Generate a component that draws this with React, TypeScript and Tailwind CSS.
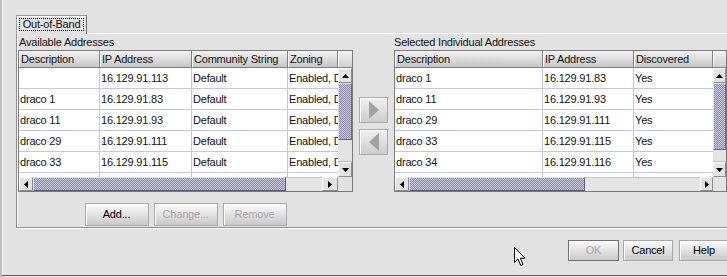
import React from 'react';

type Col = { label: string; w: number };

const thumbPattern =
  'bg-[repeating-conic-gradient(#8c8ca8_0%_25%,#c8c8da_0%_50%)] bg-size-[2px_2px]';

function Tri({ dir }: { dir: 'up' | 'down' | 'left' | 'right' }) {
  const pts = {
    up: '0,4 3.5,0 7,4',
    down: '0,0 3.5,4 7,0',
    left: '4,0 0,3.5 4,7',
    right: '0,0 4,3.5 0,7',
  }[dir];
  const vert = dir === 'up' || dir === 'down';
  return (
    <svg width={vert ? 7 : 4} height={vert ? 4 : 7} viewBox={vert ? '0 0 7 4' : '0 0 4 7'}>
      <polygon points={pts} fill="#000" />
    </svg>
  );
}

function ScrollBtn({ dir, className }: { dir: 'up' | 'down' | 'left' | 'right'; className: string }) {
  return (
    <div
      className={`flex items-center justify-center bg-[#e2e2e2] border border-t-white border-l-white border-r-[#8c8c8c] border-b-[#8c8c8c] ${className}`}
    >
      <Tri dir={dir} />
    </div>
  );
}

interface TableProps {
  cols: Col[];
  rows: string[][];
  scrollW: number;
  vThumb: number;
  hThumb: number;
  hTrack: number;
}

function Table({ cols, rows, scrollW, vThumb, hThumb, hTrack }: TableProps) {
  return (
    <div className="h-[142px] border border-[#7a7a7a] flex flex-col bg-[#e2e2e2]">
      {/* header */}
      <div className="h-[17px] flex shrink-0">
        {cols.map((c) => (
          <div
            key={c.label}
            style={{ width: c.w }}
            className="shrink-0 h-full border-r border-b border-r-[#808080] border-b-[#808080] bg-linear-to-b from-[#f2f2f2] to-[#c6c6c6] shadow-[inset_1px_0_0_#ffffff] pl-[2px] leading-[17px] whitespace-nowrap overflow-hidden"
          >
            {c.label}
          </div>
        ))}
        <div className="flex-1 h-full border-b border-b-[#808080] bg-linear-to-b from-[#f2f2f2] to-[#d0d0d0] shadow-[inset_1px_0_0_#ffffff]" />
      </div>

      {/* body */}
      <div className="h-[109px] flex shrink-0">
        <div className="flex-1 bg-white overflow-hidden">
          {rows.map((r, i) => (
            <div key={i} className="flex h-[21px] border-b border-b-[#c4c4f0]">
              {cols.map((c, j) => (
                <div
                  key={j}
                  style={{ width: c.w }}
                  className={`shrink-0 h-[20px] leading-[21px] pl-[1px] whitespace-nowrap overflow-hidden ${
                    j < cols.length - 1 ? 'border-r border-r-[#c4c4f0]' : ''
                  }`}
                >
                  {r[j]}
                </div>
              ))}
            </div>
          ))}
        </div>
        <div style={{ width: scrollW }} className="shrink-0 flex flex-col">
          <ScrollBtn dir="up" className="h-[15px] shrink-0" />
          <div
            style={{ height: vThumb }}
            className={`shrink-0 border border-t-[#dcdce8] border-l-[#dcdce8] border-r-[#6a6a86] border-b-[#6a6a86] ${thumbPattern}`}
          />
          <div className="flex-1 bg-[#e4e4e4] border-b border-b-[#bdbdbd]" />
          <ScrollBtn dir="down" className="h-[15px] shrink-0" />
        </div>
      </div>

      {/* horizontal scrollbar */}
      <div className="h-[14px] flex shrink-0">
        <ScrollBtn dir="left" className="w-[14px] shrink-0" />
        <div
          style={{ width: hThumb }}
          className={`shrink-0 border border-t-[#dcdce8] border-l-[#dcdce8] border-r-[#5e5e7a] border-b-[#5e5e7a] ${thumbPattern}`}
        />
        <div style={{ width: hTrack }} className="shrink-0 bg-[#e4e4e4] border-t border-t-[#c4c4c4]" />
        <ScrollBtn dir="right" className="flex-1" />
        <div style={{ width: scrollW }} className="shrink-0 bg-[#e2e2e2]" />
      </div>
    </div>
  );
}

function Button({ label, w, disabled, isDefault }: { label: string; w: string; disabled?: boolean; isDefault?: boolean }) {
  return (
    <div
      className={`${w} shrink-0 flex items-center justify-center border bg-linear-to-b from-[#fbfbfb] to-[#c9c9c9] shadow-[inset_1px_1px_0_#ffffff] ${
        isDefault ? 'border-[#6e6e6e]' : 'border-[#a8a8a8]'
      } ${disabled ? 'text-[#a6a6a6]' : 'text-black'}`}
    >
      {label}
    </div>
  );
}

function MoveBtn({ dir }: { dir: 'left' | 'right' }) {
  return (
    <div className="w-[29px] h-[26px] border border-[#a9a9a9] bg-linear-to-b from-[#f0f0f0] to-[#cdcdcd] shadow-[inset_1px_1px_0_#ffffff] flex items-center justify-center">
      <svg width="10" height="18" viewBox="0 0 10 18">
        <polygon points={dir === 'right' ? '0,0 10,9 0,18' : '10,0 0,9 10,18'} fill="#a2a2a2" />
      </svg>
    </div>
  );
}

const leftCols: Col[] = [
  { label: 'Description', w: 81 },
  { label: 'IP Address', w: 92 },
  { label: 'Community String', w: 96 },
  { label: 'Zoning', w: 50 },
];

const leftRows = [
  ['', '16.129.91.113', 'Default', 'Enabled, D'],
  ['draco 1', '16.129.91.83', 'Default', 'Enabled, D'],
  ['draco 11', '16.129.91.93', 'Default', 'Enabled, D'],
  ['draco 29', '16.129.91.111', 'Default', 'Enabled, D'],
  ['draco 33', '16.129.91.115', 'Default', 'Enabled, D'],
  ['', '', '', ''],
];

const rightCols: Col[] = [
  { label: 'Description', w: 148 },
  { label: 'IP Address', w: 91 },
  { label: 'Discovered', w: 79 },
];

const rightRows = [
  ['draco 1', '16.129.91.83', 'Yes'],
  ['draco 11', '16.129.91.93', 'Yes'],
  ['draco 29', '16.129.91.111', 'Yes'],
  ['draco 33', '16.129.91.115', 'Yes'],
  ['draco 34', '16.129.91.116', 'Yes'],
  ['', '', ''],
];

export default function App() {
  return (
    <div className="relative w-[727px] h-[277px] overflow-hidden flex flex-col bg-[#e2e2e2] border-l-2 border-l-[#bababa] shadow-[inset_1px_0_0_#f6f6f6] pt-[15px] font-['Liberation_Sans',Arial,sans-serif] text-[11px] tracking-[-0.2px] text-[#111]">
      {/* tab strip */}
      <div className="flex h-[19px] ml-[14px] shrink-0">
        <div className="w-[71px] border-t border-l border-r border-t-[#9a9a9a] border-l-[#9a9a9a] border-r-[#6a6a6a] shadow-[inset_1px_1px_0_#ffffff] flex items-start justify-center pt-[2px]">
          <span className="border border-dotted border-black px-[3px] leading-[11px] h-[13px]">Out-of-Band</span>
        </div>
        <div className="flex-1 border-b border-b-white" />
      </div>

      {/* tab panel */}
      <div className="ml-[14px] h-[194px] shrink-0 flex border-l border-b border-l-[#8e8e8e] border-b-[#8e8e8e] shadow-[inset_1px_0_0_#ffffff,0_1px_0_#ffffff] pl-[1px]">
        <div className="w-[335px] flex flex-col shrink-0">
          <div className="h-[16px] leading-[16px] pl-[1px]">Available Addresses</div>
          <Table cols={leftCols} rows={leftRows} scrollW={14} vThumb={57} hThumb={253} hTrack={36} />
          <div className="mt-[11px] flex justify-center gap-[5px] h-[23px]">
            <Button label="Add..." w="w-[64px]" />
            <Button label="Change..." w="w-[64px]" disabled />
            <Button label="Remove" w="w-[64px]" disabled />
          </div>
        </div>
        <div className="w-[41px] shrink-0 flex flex-col gap-[6px] pl-[6px] pt-[63px]">
          <MoveBtn dir="right" />
          <MoveBtn dir="left" />
        </div>
        <div className="w-[333px] flex flex-col shrink-0">
          <div className="h-[16px] leading-[16px]">Selected Individual Addresses</div>
          <Table cols={rightCols} rows={rightRows} scrollW={13} vThumb={67} hThumb={176} hTrack={115} />
        </div>
      </div>

      {/* dialog buttons */}
      <div className="mt-[12px] h-[21px] flex pl-[566px]">
        <Button label="OK" w="w-[51px]" disabled isDefault />
        <div className="w-[4px] shrink-0" />
        <Button label="Cancel" w="w-[50px]" />
        <div className="w-[6px] shrink-0" />
        <Button label="Help" w="w-[50px]" />
      </div>

      <div className="mt-auto h-[1px] bg-[#5a5a5a]" />
      <div className="h-[1px] bg-[#eeeeee]" />

      {/* mouse pointer */}
      <svg className="absolute left-[512px] top-[247px]" width="12" height="20" viewBox="0 0 12 20">
        <path d="M0.5 0.5 L0.5 15.5 L4 12 L6.8 18.5 L9 17.5 L6.3 11.2 L11 11.2 Z" fill="#ffffff" stroke="#000000" strokeWidth="1" />
      </svg>
    </div>
  );
}
